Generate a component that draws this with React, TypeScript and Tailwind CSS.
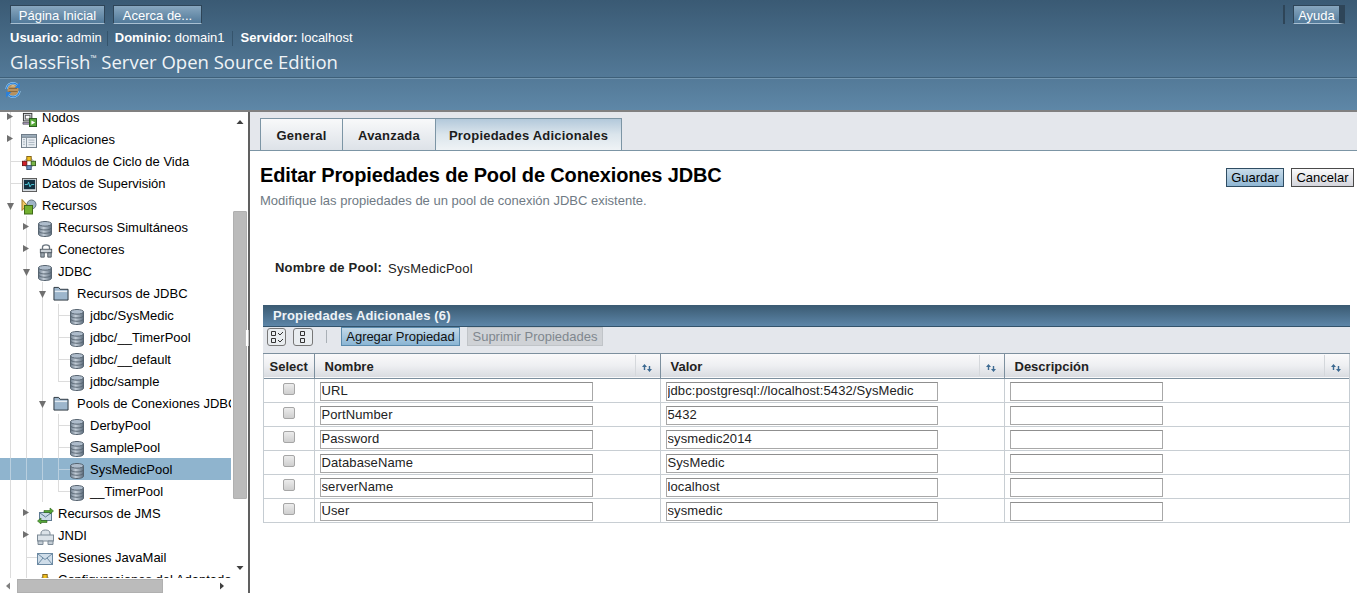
import React from "react";

const Db = () => (
  <svg width="14" height="16" viewBox="1 0.500 14 17" preserveAspectRatio="none" className="shrink-0">
    <defs>
      <linearGradient id="dbg" x1="0" x2="1" y1="0" y2="0">
        <stop offset="0" stopColor="#6f7f8f" />
        <stop offset="0.4" stopColor="#c4ced8" />
        <stop offset="1" stopColor="#5c6c7c" />
      </linearGradient>
    </defs>
    <path d="M1.500 3.500v11c0 1.500 3 2.500 6.500 2.500s6.500-1 6.500-2.500v-11z" fill="url(#dbg)" stroke="#55626e" />
    <ellipse cx="8" cy="3.500" rx="6.500" ry="2.500" fill="#aebccb" stroke="#55626e" />
    <path d="M1.500 7.500c0 1.500 3 2.500 6.500 2.500s6.500-1 6.500-2.500M1.500 11c0 1.500 3 2.500 6.500 2.500s6.500-1 6.500-2.500" fill="none" stroke="#55626e" />
  </svg>
);

const Folder = () => (
  <svg width="16" height="15" viewBox="0 0 17 16" preserveAspectRatio="none" className="shrink-0">
    <path d="M1 15V1.500h5l1.500 2H16V15z" fill="#9db6cc" stroke="#27323b" />
    <path d="M2 5h13v1.500H2z" fill="#e4ecf2" />
  </svg>
);

const Nodes = () => (
  <svg width="15" height="15" viewBox="0 0 16 16" className="shrink-0">
    <rect x="1.500" y="1.500" width="9" height="8" fill="#dfe3e8" stroke="#333" />
    <rect x="3.500" y="3.500" width="5" height="4" fill="#fff" stroke="#555" />
    <path d="M1 11h9v2H1z" fill="#b9a8d0" stroke="#333" strokeWidth=".7" />
    <rect x="8" y="7" width="7.500" height="8.500" fill="#58a83a" stroke="#25591a" />
    <path d="M10 9l4 2.200-4 2.300z" fill="#fff" />
  </svg>
);

const Apps = () => (
  <svg width="16" height="14" viewBox="0 0 16 15" preserveAspectRatio="none" className="shrink-0">
    <rect x=".5" y=".5" width="15" height="14" fill="#e8edf2" stroke="#6f7c88" />
    <rect x=".5" y=".5" width="15" height="3" fill="#9eaebc" stroke="#6f7c88" />
    <path d="M5.500 4v10" stroke="#8d9aa6" />
    <path d="M2 6h2M2 8.500h2M2 11h2M7.500 6.500h6M7.500 9h6M7.500 11.500h6" stroke="#a7b3be" />
  </svg>
);

const Life = () => (
  <svg width="14" height="14" viewBox="0 0 16 16" className="shrink-0">
    <circle cx="8" cy="8" r="5.500" fill="none" stroke="#8a97a3" />
    <rect x="5.500" y="0.500" width="5" height="5" fill="#f0c020" stroke="#7a5a10" />
    <rect x="0.500" y="6" width="5" height="5" fill="#d0202a" stroke="#6a1015" />
    <rect x="10.500" y="6" width="5" height="5" fill="#7ab648" stroke="#33591a" />
    <rect x="5.500" y="11" width="5" height="4.500" fill="#6f94c4" stroke="#30486a" />
  </svg>
);

const Monitor = () => (
  <svg width="15" height="14" viewBox="0 0 16 15" preserveAspectRatio="none" className="shrink-0">
    <rect x=".5" y=".5" width="15" height="14" fill="#d7dce0" stroke="#555" />
    <rect x="2" y="2" width="12" height="10" fill="#123040" />
    <path d="M3 7h3l1-2.500 1.500 5L10 7h3" fill="none" stroke="#4fd0e0" />
  </svg>
);

const Res = () => (
  <svg width="16" height="16" viewBox="0 0 16 16" className="shrink-0">
    <path d="M1 .5v11l5-5.500z" fill="#f0c868" stroke="#a07820" />
    <circle cx="10.500" cy="5.500" r="4.500" fill="#9fb4c6" stroke="#61717f" />
    <rect x="3.500" y="6.500" width="8" height="8.500" fill="#73b030" stroke="#3f6a18" />
  </svg>
);

const Conn = () => (
  <svg width="14" height="14" viewBox="0 0 16 16" className="shrink-0">
    <path d="M4 6V3.500C4 2 5.500 1 8 1s4 1 4 2.500V6" fill="none" stroke="#6b7680" strokeWidth="1.500" />
    <rect x="1.500" y="6" width="13" height="4" fill="#c9d0d6" stroke="#4d5760" />
    <path d="M2 10h4v5H2zM10 10h4v5h-4z" fill="#9aa5ae" stroke="#4d5760" />
  </svg>
);

const Jms = () => (
  <svg width="17" height="17" viewBox="0 0 17 17" className="shrink-0">
    <rect x="2.500" y="5.500" width="12" height="8" fill="#c9d9e6" stroke="#5e7a92" />
    <path d="M3 6l5.500 4L14 6" fill="none" stroke="#5e7a92" />
    <path d="M7 3.500h6V1l3.500 3L13 7V5.500H7z" fill="#55a838" stroke="#2a6018" strokeWidth=".6" />
    <path d="M10 13.500H4V11L.5 14 4 17v-1.500h6z" fill="#55a838" stroke="#2a6018" strokeWidth=".6" />
  </svg>
);

const Jndi = () => (
  <svg width="17" height="16" viewBox="0 0 17 16" className="shrink-0">
    <path d="M4 6V4c0-2 2-3 4.500-3S13 2 13 4v2" fill="#dbe2e8" stroke="#7c8a96" />
    <rect x=".5" y="6" width="16" height="6" fill="#dbe2e8" stroke="#7c8a96" />
    <path d="M1 12h5v3.500H1zM11 12h5v3.500h-5z" fill="#c3ccd4" stroke="#7c8a96" />
  </svg>
);

const Mail = () => (
  <svg width="16" height="12" viewBox="0 0 16 12" className="shrink-0">
    <rect x=".5" y=".5" width="15" height="11" fill="#cfdde9" stroke="#6c8aa3" />
    <path d="M1 1l7 5.500L15 1M1 11l5-6M15 11l-5-6" fill="none" stroke="#6c8aa3" />
  </svg>
);

type RowT = {
  t: string;
  icon: React.ReactNode;
  x: number; // where the icon starts
  tx: number; // where the label starts
  exp?: "r" | "d";
  guides: number[];
  conn?: number;
  sel?: boolean;
  half?: boolean;
  flat?: boolean;
};

const L3 = [10, 26, 42, 58];

const rows: RowT[] = [
  { t: "Nodos", icon: <Nodes />, x: 22, tx: 42, exp: "r", guides: [10] },
  { t: "Aplicaciones", icon: <Apps />, x: 21, tx: 42, exp: "r", guides: [10] },
  { t: "Módulos de Ciclo de Vida", icon: <Life />, x: 22, tx: 42, guides: [10], conn: 10 },
  { t: "Datos de Supervisión", icon: <Monitor />, x: 22, tx: 42, guides: [10], conn: 10 },
  { t: "Recursos", icon: <Res />, x: 21, tx: 42, exp: "d", guides: [10] },
  { t: "Recursos Simultáneos", icon: <Db />, x: 38, tx: 58, exp: "r", guides: [10, 26] },
  { t: "Conectores", icon: <Conn />, x: 39, tx: 58, exp: "r", guides: [10, 26] },
  { t: "JDBC", icon: <Db />, x: 38, tx: 58, exp: "d", guides: [10, 26] },
  { t: "Recursos de JDBC", icon: <Folder />, x: 53, tx: 77, exp: "d", guides: [10, 26, 42], flat: true },
  { t: "jdbc/SysMedic", icon: <Db />, x: 70, tx: 90, guides: L3, conn: 58 },
  { t: "jdbc/__TimerPool", icon: <Db />, x: 70, tx: 90, guides: L3, conn: 58 },
  { t: "jdbc/__default", icon: <Db />, x: 70, tx: 90, guides: L3, conn: 58 },
  { t: "jdbc/sample", icon: <Db />, x: 70, tx: 90, guides: L3, conn: 58, half: true },
  { t: "Pools de Conexiones JDBC", icon: <Folder />, x: 53, tx: 77, exp: "d", guides: [10, 26, 42], flat: true },
  { t: "DerbyPool", icon: <Db />, x: 70, tx: 90, guides: L3, conn: 58 },
  { t: "SamplePool", icon: <Db />, x: 70, tx: 90, guides: L3, conn: 58 },
  { t: "SysMedicPool", icon: <Db />, x: 70, tx: 90, guides: L3, conn: 58, sel: true },
  { t: "__TimerPool", icon: <Db />, x: 70, tx: 90, guides: L3, conn: 58, half: true },
  { t: "Recursos de JMS", icon: <Jms />, x: 37, tx: 58, exp: "r", guides: [10, 26] },
  { t: "JNDI", icon: <Jndi />, x: 37, tx: 58, exp: "r", guides: [10, 26] },
  { t: "Sesiones JavaMail", icon: <Mail />, x: 37, tx: 58, guides: [10, 26], conn: 26 },
  { t: "Configuraciones del Adaptador", icon: <Life />, x: 38, tx: 58, guides: [10, 26], conn: 26 },
];

function TreeRow({ r }: { r: RowT }) {
  const last = r.guides[r.guides.length - 1];
  const line = r.sel ? "#b9cfdf" : "#dcdcdc";
  return (
    <div className={`relative flex h-[22px] w-[231px] items-center overflow-hidden whitespace-nowrap ${r.sel ? "bg-[#8fb4ce]" : ""}`}>
      <svg width="231" height="22" className="absolute left-0 top-0">
        {r.guides.map((g) => (
          <path key={g} d={`M${g + 0.5} 0V${r.half && g === last ? 11 : 22}`} stroke={line} fill="none" />
        ))}
        {r.conn !== undefined && <path d={`M${r.conn} 11.500H${r.x}`} stroke={line} fill="none" />}
        {r.exp === "r" && <path d={`M${last - 3} 7l6 3.500-6 3.500z`} fill="#707070" />}
        {r.exp === "d" && <path d={`M${last - 3} 9h7l-3.500 7z`} fill="#707070" />}
      </svg>
      <span className="relative flex items-center" style={{ marginLeft: r.x }}>
        <span className={`flex items-center ${r.flat ? "" : "mt-[4px]"}`} style={{ width: r.tx - r.x }}>
          {r.icon}
        </span>
        <span className="mt-[2px] text-[13px] leading-[22px] text-black">{r.t}</span>
      </span>
    </div>
  );
}

const TopBtn = ({ children, extra = "" }: { children: React.ReactNode; extra?: string }) => (
  <button className={`h-[19px] border border-t-[#2e4558] border-l-[#2e4558] border-r-[#2e4558] border-b-[#a9c0d2] bg-gradient-to-b from-[#88a7bf] to-[#527a9a] pt-[2px] text-[13px] leading-[15px] text-white ${extra}`}>
    {children}
  </button>
);

const Sort = () => (
  <span className="absolute right-0 top-[1px] flex h-[21px] w-[25px] items-center justify-center border-l border-[#d5d8dc]">
    <svg width="10" height="8" viewBox="0 0 10 8" className="mr-[2px] mt-[4px]">
      <path d="M2.500 0L0 3h1.800v3h1.400V3H5z" fill="#3d6a92" />
      <path d="M7.500 8L5 5h1.800V2h1.400v3H10z" fill="#3d6a92" />
    </svg>
  </span>
);

const data = [
  ["URL", "jdbc:postgresql://localhost:5432/SysMedic"],
  ["PortNumber", "5432"],
  ["Password", "sysmedic2014"],
  ["DatabaseName", "SysMedic"],
  ["serverName", "localhost"],
  ["User", "sysmedic"],
];

const Input = ({ v, w }: { v: string; w: string }) => (
  <input
    readOnly
    value={v}
    className={`${w} mt-[2px] block h-[19px] border border-[#a8a8a8] border-t-[#8f8f8f] bg-white px-px text-[13px] tracking-[0.1px] text-[#222] outline-none`}
  />
);

export default function App() {
  return (
    <div className="flex h-[593px] w-[1357px] flex-col overflow-hidden bg-white font-['Liberation_Sans',Arial,sans-serif]">
      {/* Header */}
      <header className="h-[110px] shrink-0 bg-gradient-to-b from-[#3a5a74] to-[#5e87a7]">
        <div className="flex h-[29px] items-start pl-[10px] pr-[12px] pt-[5px]">
          <div className="flex gap-[8px]">
            <TopBtn extra="w-[95px]">Página Inicial</TopBtn>
            <TopBtn extra="w-[89px]">Acerca de...</TopBtn>
          </div>
          <div className="ml-auto flex items-start gap-[8px]">
            <span className="h-[19px] w-[2px] bg-[#2e4558]" />
            <TopBtn extra="w-[52px] border-r-[6px]">Ayuda</TopBtn>
          </div>
        </div>
        <div className="flex h-[18px] items-center pl-[10px] text-[13px] text-white">
          <b>Usuario:</b>&nbsp;admin
          <span className="ml-[5px] mr-[7px] h-[15px] border-l border-[#35546c]" />
          <b>Dominio:</b>&nbsp;domain1
          <span className="ml-[7px] mr-[8px] h-[15px] border-l border-[#35546c]" />
          <b>Servidor:</b>&nbsp;localhost
        </div>
        <div className="flex h-[31px] items-center border-b border-[#3e6079] pl-[10px] font-['Open_Sans',sans-serif] text-[18.500px] text-[#f0f4f7]">
          GlassFish<sup className="text-[8px]">™</sup>&nbsp;Server Open Source Edition
        </div>
        <div className="border-t border-[#7396b0] pl-[5px] pt-[3px]">
          <svg width="16" height="16" viewBox="0 0 16 16" className="block">
            <circle cx="8" cy="8" r="5.500" fill="#b8925f" />
            <path d="M4 6.500h8M3.500 9.500h9" stroke="#8a6a40" />
            <path d="M5 4.500l3-1.500 3 1.500z" fill="#dcc8a0" />
            <path d="M1.500 7a6.500 6.500 0 0 1 11-4" fill="none" stroke="#a8d8fa" strokeWidth="2.200" />
            <path d="M1.500 7a6.500 6.500 0 0 1 11-4" fill="none" stroke="#2c80d8" strokeWidth="1.200" />
            <path d="M15 .5v5.500H9.500z" fill="#2c80d8" />
            <path d="M14.500 9a6.500 6.500 0 0 1-11 4" fill="none" stroke="#a8d8fa" strokeWidth="2.200" />
            <path d="M14.500 9a6.500 6.500 0 0 1-11 4" fill="none" stroke="#2c80d8" strokeWidth="1.200" />
            <path d="M1 15.500V10h5.500z" fill="#2c80d8" />
          </svg>
        </div>
      </header>

      {/* Body */}
      <div className="flex min-h-0 flex-1 border-t-2 border-[#808080]">
        {/* Sidebar */}
        <aside className="relative flex h-[481px] w-[250px] shrink-0 flex-col border-r-2 border-[#606060]">
          <div className="flex min-h-0 flex-1">
            <div className="h-[466px] w-[231px] overflow-hidden">
              <div className="-mt-[6px]">
                {rows.map((r) => (
                  <TreeRow key={r.t} r={r} />
                ))}
              </div>
            </div>
            <div className="flex w-[17px] flex-col items-center bg-white">
              <svg width="10" height="10" viewBox="0 0 10 10" className="mt-[5px] shrink-0">
                <path d="M1.500 7h7L5 3z" fill="#404040" />
              </svg>
              <div className="mt-[84px] h-[288px] w-[14px] rounded-[1px] border border-[#b0b0b0] bg-[#bbbbbb]" />
              <svg width="10" height="10" viewBox="0 0 10 10" className="mt-[64px] shrink-0">
                <path d="M1.500 3h7L5 7z" fill="#404040" />
              </svg>
            </div>
          </div>
          <div className="flex h-[15px] w-[231px] items-center bg-white">
            <svg width="10" height="10" viewBox="0 0 10 10" className="ml-[3px] shrink-0">
              <path d="M7 1.500v7L3 5z" fill="#808080" />
            </svg>
            <div className="ml-[4px] h-[14px] w-[146px] border border-[#b0b0b0] bg-[#bbbbbb]" />
            <svg width="10" height="10" viewBox="0 0 10 10" className="ml-[54px] shrink-0">
              <path d="M3 1.500v7L7 5z" fill="#404040" />
            </svg>
          </div>
          <div className="absolute -right-px top-[218px] h-[16px] w-[4px] border-x border-[#c0c0c0] bg-white" />
        </aside>

        {/* Main */}
        <main className="min-w-0 flex-1">
          <div className="flex h-[39px] items-end border-b border-[#7c95a5] bg-[#e4e7ec] pl-[10px]">
            {[
              ["General", "w-[83px]", false],
              ["Avanzada", "w-[94px]", false],
              ["Propiedades Adicionales", "w-[187px]", true],
            ].map(([t, w, on], i) => (
              <div
                key={t as string}
                className={`-mb-px flex h-[33px] items-center justify-center border border-[#7c95a5] pt-[2px] text-[13px] font-bold tracking-[0.22px] text-[#1c1c1c] ${w} ${i > 0 ? "-ml-px" : ""} ${on ? "bg-gradient-to-b from-[#b3c9db] via-[#dbe5ec] to-[#eff3f6]" : "bg-gradient-to-b from-[#f8f9fa] to-[#dde2e8]"}`}
              >
                {t as string}
              </div>
            ))}
          </div>

          <div className="flex h-[88px] items-start justify-between pl-[10px] pr-[3px] pt-[11px]">
            <div>
              <h1 className="text-[20px] font-bold leading-[26px] tracking-[-0.14px] text-black">Editar Propiedades de Pool de Conexiones JDBC</h1>
              <p className="mt-[5px] text-[13px] leading-[15px] text-[#6f7a84]">Modifique las propiedades de un pool de conexión JDBC existente.</p>
            </div>
            <div className="flex gap-[7px] pt-[6px]">
              <button className="h-[19px] w-[58px] border border-[#2f4d63] bg-gradient-to-b from-[#c9dcea] to-[#8fb6d3] text-[13px] leading-[15px] text-black">Guardar</button>
              <button className="h-[19px] w-[63px] border border-[#4a4a4a] bg-gradient-to-b from-[#fbfbfc] to-[#d3d4db] text-[13px] leading-[15px] text-black">Cancelar</button>
            </div>
          </div>

          <div className="flex h-[66px] items-start pl-[25px] pt-[19px] text-[13px]">
            <span className="pt-[2px] font-bold leading-[15px] tracking-[0.2px] text-[#222]">Nombre de Pool:</span>
            <span className="pl-[6px] pt-[3px] leading-[15px] tracking-[0.2px] text-[#222]">SysMedicPool</span>
          </div>

          {/* Table panel */}
          <section className="ml-[13px] w-[1087px] border-x border-[#c5ccd2]">
            <div className="-mx-px h-[22px] border-b border-[#33536b] bg-gradient-to-b from-[#3a5a72] to-[#5d86a8] pl-[10px] text-[13px] font-bold leading-[21px] tracking-[0.15px] text-[#eef3f7]">
              Propiedades Adicionales (6)
            </div>
            <div className="-mx-px box-content flex h-[26px] items-start border-b border-[#7c8f9e] bg-[#e4e7ec] pl-[3px]">
              <div className="ml-px mt-px flex h-[18px] w-[19px] items-center justify-center rounded-[3px] border border-[#777] bg-[#e9edf0]">
                <svg width="14" height="14" viewBox="0 0 14 14">
                  <path d="M1.500 1.500h4v4h-4zM1.500 8.500h4v4h-4z" fill="none" stroke="#333" />
                  <path d="M8 3l2 2 3-3M8 10l2 2 3-3" fill="none" stroke="#333" />
                </svg>
              </div>
              <div className="ml-[7px] mt-px flex h-[18px] w-[20px] items-center justify-center rounded-[3px] border border-[#777] bg-[#e9edf0]">
                <svg width="10" height="14" viewBox="0 0 10 14">
                  <path d="M2.500 1.500h4v4h-4zM2.500 8.500h4v4h-4z" fill="none" stroke="#333" />
                </svg>
              </div>
              <span className="ml-[13px] mt-[3px] h-[13px] border-l border-[#a9b0b6]" />
              <button className="ml-[14px] h-[19px] w-[119px] border border-[#5b8bad] bg-gradient-to-b from-[#c3d9e8] to-[#8ab5d4] text-[13px] leading-[15px] tracking-[-0.05px] text-[#111]">Agregar Propiedad</button>
              <button className="ml-[7px] h-[19px] w-[136px] border border-[#c0c4c8] bg-[#cfd2d6] text-[13px] leading-[15px] text-[#80878e]">Suprimir Propiedades</button>
            </div>
            <table className="w-full table-fixed border-collapse">
              <colgroup>
                <col className="w-[50px]" />
                <col className="w-[346px]" />
                <col className="w-[344px]" />
                <col />
              </colgroup>
              <thead>
                <tr className="h-[24px] border-b border-[#7c8f9e] bg-gradient-to-b from-[#fafafb] via-[#eeeff2] to-[#d9dce1]">
                  <th className="border-r border-[#7c8f9e] pt-[2px] text-center text-[13px] font-bold leading-[15px] text-[#222]">Select</th>
                  {["Nombre", "Valor", "Descripción"].map((h, i) => (
                    <th key={h} className={`relative pl-[10px] pt-[2px] text-left text-[13px] font-bold leading-[15px] text-[#222] ${i < 2 ? "border-r border-[#7c8f9e]" : ""}`}>
                      {h}
                      <Sort />
                    </th>
                  ))}
                </tr>
              </thead>
              <tbody>
                {data.map(([a, b]) => (
                  <tr key={a} className="h-[24px] border-b border-[#c8ced3]">
                    <td className="border-r border-[#c8ced3]">
                      <span className="mx-auto -mt-[3px] block h-[12px] w-[12px] rounded-[2px] border border-[#a6a6a6] bg-gradient-to-b from-[#ececec] to-[#cfcfcf]" />
                    </td>
                    <td className="border-r border-[#c8ced3] pl-[5px]"><Input v={a} w="w-[273px]" /></td>
                    <td className="border-r border-[#c8ced3] pl-[5px]"><Input v={b} w="w-[272px]" /></td>
                    <td className="pl-[5px]"><Input v="" w="w-[153px]" /></td>
                  </tr>
                ))}
              </tbody>
            </table>
          </section>
        </main>
      </div>
    </div>
  );
}
